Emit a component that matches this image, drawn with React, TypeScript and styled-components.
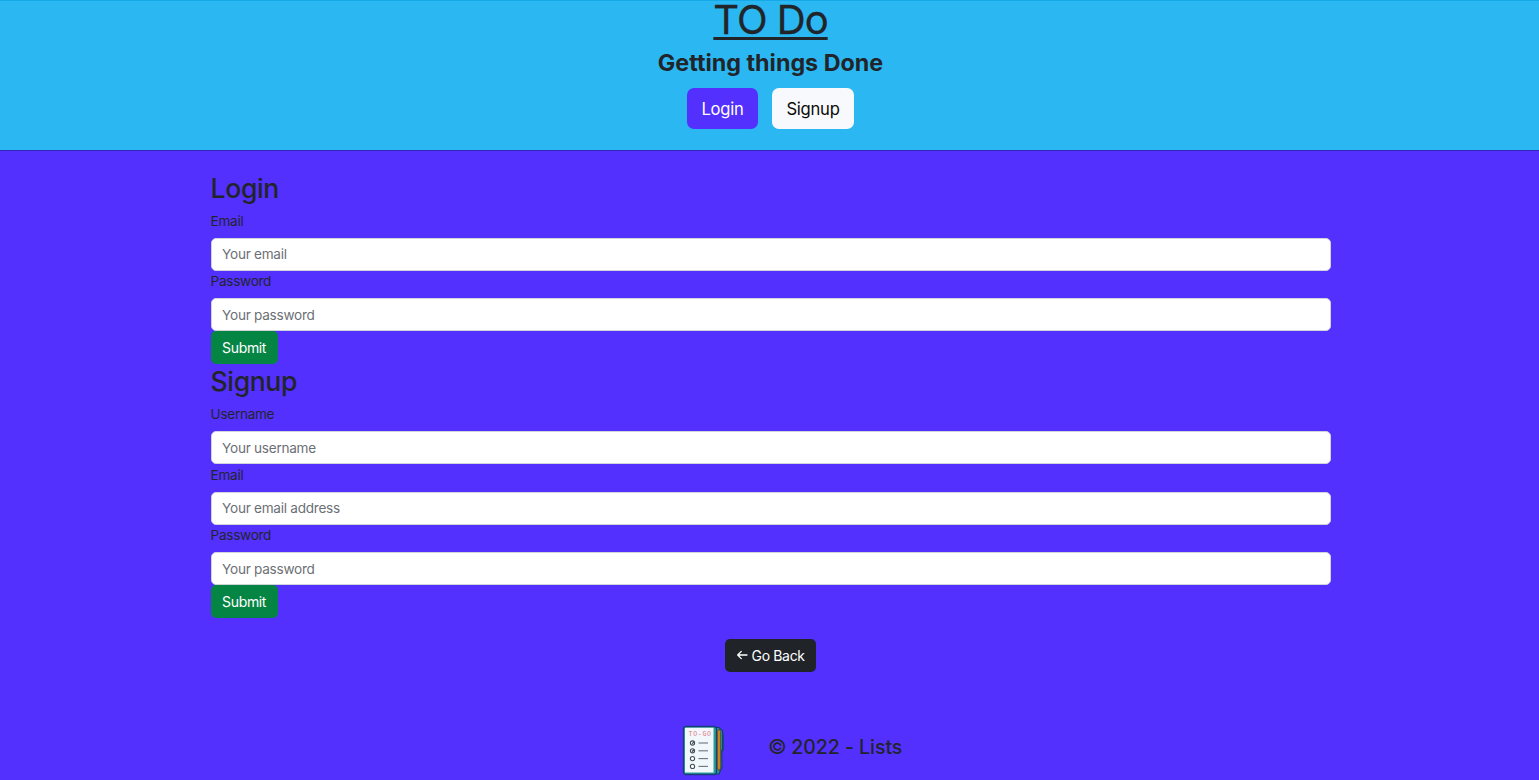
import React from "react";
import styled, { createGlobalStyle } from "styled-components";

const GlobalStyle = createGlobalStyle`
  *, *::before, *::after { box-sizing: border-box; }
  body {
    margin: 0;
    background: #5430ff;
    color: #212529;
    font-family: Inter, "Liberation Sans", sans-serif;
    font-size: 14px;
    line-height: 20.8px;
  }
`;

const Page = styled.div`
  height: 780px;
  overflow: hidden;
  display: flex;
  flex-direction: column;
`;

const Header = styled.header`
  height: 151px;
  flex: none;
  display: flex;
  flex-direction: column;
  align-items: center;
  background: #2bb8f2;
  border-top: 1px solid #16a9e8;
  border-bottom: 1px solid #3426b8;
  padding-left: 2px;
`;

const Title = styled.h1`
  margin: 0;
  font-size: 40px;
  font-weight: 400;
  line-height: 38px;
  letter-spacing: -1px;
  -webkit-text-stroke: 0.3px currentColor;
  text-decoration: underline;
  text-decoration-thickness: 3px;
  text-underline-offset: 3px;
  text-decoration-skip-ink: none;
`;

const Tagline = styled.p`
  margin: 9px 0 0;
  font-size: 23.3px;
  font-weight: 700;
  line-height: 30px;
  letter-spacing: 0;
`;

const Nav = styled.nav`
  display: flex;
  gap: 14px;
  margin-top: 9.5px;
`;

const NavButton = styled.button<{ $primary?: boolean }>`
  width: ${(p) => (p.$primary ? 71 : 82)}px;
  height: 41px;
  padding: 1px 0 0;
  border: 0;
  border-radius: 7px;
  background: ${(p) => (p.$primary ? "#5430ff" : "#f8f9fc")};
  color: ${(p) => (p.$primary ? "#fff" : "#0a0a0a")};
  font-family: inherit;
  font-size: 16.6px;
  letter-spacing: -0.25px;
`;

const Main = styled.main`
  width: 1120px;
  flex: none;
  margin: 19px 0 0 210.6px;
`;

const Form = styled.form`
  display: flex;
  flex-direction: column;
  align-items: flex-start;
`;

const Heading = styled.h2`
  margin: 0;
  padding: 0.8px 0 4.7px;
  font-size: 26.6px;
  font-weight: 500;
  line-height: 34.7px;
  letter-spacing: -0.4px;
`;

const Label = styled.label`
  padding: 0.5px 0 6.2px;
  font-size: 13.6px;
  letter-spacing: -0.3px;
`;

const Input = styled.input`
  width: 100%;
  height: 33px;
  padding: 0 10.5px;
  border: 1px solid #ced4da;
  border-radius: 5px;
  background: #fff;
  font-family: inherit;
  font-size: 13.6px;
  letter-spacing: -0.27px;
  &::placeholder {
    color: #6c6f75;
    opacity: 1;
  }
`;

const Button = styled.button<{ $dark?: boolean }>`
  width: ${(p) => (p.$dark ? 91 : 67)}px;
  height: ${(p) => (p.$dark ? 33 : 32.5)}px;
  padding: 0;
  display: flex;
  align-items: center;
  justify-content: center;
  gap: 4px;
  border: 0;
  border-radius: 5px;
  background: ${(p) => (p.$dark ? "#202429" : "#058544")};
  color: #fff;
  font-family: inherit;
  font-size: 14px;
  letter-spacing: -0.35px;
`;

const BackRow = styled.div`
  display: flex;
  justify-content: center;
  margin: 21px 1px 0 0;
`;

const Footer = styled.footer`
  flex: none;
  display: flex;
  align-items: flex-start;
  margin: 53px 0 0 682px;
`;

const Copyright = styled.p`
  display: flex;
  align-items: center;
  gap: 4.5px;
  margin: 8.3px 0 0 43px;
  font-size: 19.5px;
  line-height: 28px;
  font-weight: 500;
  letter-spacing: -0.03px;
  white-space: nowrap;
`;

const CopyrightSign = styled.span`
  font-size: 20.5px;
  font-weight: 400;
`;

const BackArrow = () => (
  <svg width="12" height="12" viewBox="0 0 12 12" fill="none" stroke="currentColor" strokeWidth="1.3" strokeLinecap="round" strokeLinejoin="round">
    <path d="M11 6H1.800M5.300 2.400 1.700 6l3.600 3.600" />
  </svg>
);

const NotebookLogo = () => (
  <svg width="43" height="51" viewBox="0 0 43 51" fill="none">
    <path d="M33 2.500h4L40.500 6v18l-.8 2 .3 16-3 7h-4z" fill="#239c9c" stroke="#123f72" strokeWidth="1.2" />
    <path d="M41 9v17" stroke="#124d63" strokeWidth="1.500" />
    <rect x="1.500" y="1.500" width="33" height="48" rx="2.500" fill="#2a9d99" stroke="#183c78" strokeWidth="1.300" />
    <path d="M3 2.800h28.500v44.700H3z" fill="#f1f7fa" />
    <path d="M35.300 6.500 36.900 4l1.700 2.500v36.500l-1.600 3-1.700-3z" fill="#c7851c" stroke="#564333" strokeWidth=".8" />
    <text x="6.500" y="11.300" fill="#df7886" fontFamily="Liberation Mono, monospace" fontSize="6.500" fontWeight="400" textLength="22.500">TO-GO</text>
    {[18, 25.8, 33.6, 41.4].map((y, i) => (
      <g key={y} stroke="#43515b" strokeWidth="1.100">
        <circle cx="10.500" cy={y} r="2.100" fill="#fff" />
        {i < 2 && <path d={`M10 ${y - 0.2}l.7.7 1.500-1.900`} strokeWidth="1.100" />}
        <path d={`M16.500 ${y}h9.500`} stroke="#68757d" />
      </g>
    ))}
  </svg>
);

const Field = ({ id, label, type = "text", placeholder }: { id: string; label: string; type?: string; placeholder: string }) => (
  <>
    <Label htmlFor={id}>{label}</Label>
    <Input id={id} type={type} placeholder={placeholder} />
  </>
);

export default function App() {
  return (
    <>
      <GlobalStyle />
      <Page>
        <Header>
          <Title>TO Do</Title>
          <Tagline>Getting things Done</Tagline>
          <Nav>
            <NavButton $primary>Login</NavButton>
            <NavButton>Signup</NavButton>
          </Nav>
        </Header>
        <Main>
          <Form>
            <Heading>Login</Heading>
            <Field id="login-email" label="Email" type="email" placeholder="Your email" />
            <Field id="login-password" label="Password" type="password" placeholder="Your password" />
            <Button type="button">Submit</Button>
          </Form>
          <Form>
            <Heading>Signup</Heading>
            <Field id="signup-username" label="Username" placeholder="Your username" />
            <Field id="signup-email" label="Email" type="email" placeholder="Your email address" />
            <Field id="signup-password" label="Password" type="password" placeholder="Your password" />
            <Button type="button">Submit</Button>
          </Form>
          <BackRow>
            <Button type="button" $dark>
              <BackArrow />
              Go Back
            </Button>
          </BackRow>
        </Main>
        <Footer>
          <NotebookLogo />
          <Copyright>
            <CopyrightSign>©</CopyrightSign>
            <span>2022 - Lists</span>
          </Copyright>
        </Footer>
      </Page>
    </>
  );
}
